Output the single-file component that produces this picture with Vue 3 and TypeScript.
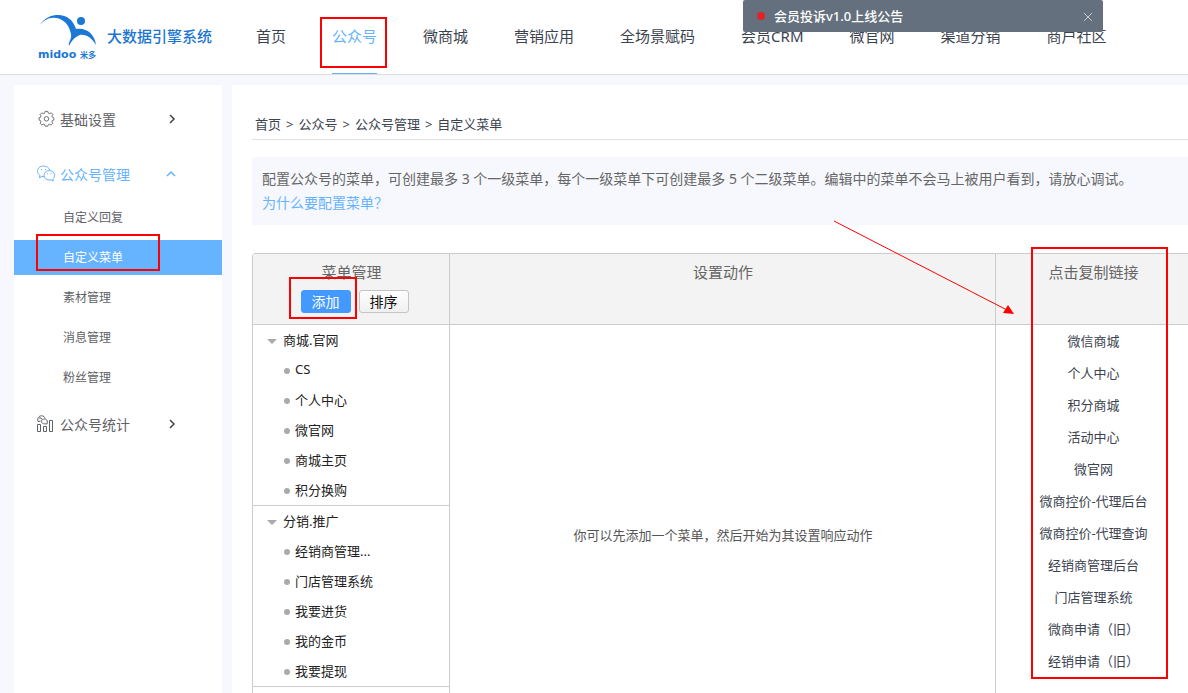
<script setup lang="ts">
interface NavItem {
  label: string
  active?: boolean
}

interface MenuGroup {
  name: string
  children: string[]
}

const navItems: NavItem[] = [
  { label: '首页' },
  { label: '公众号', active: true },
  { label: '微商城' },
  { label: '营销应用' },
  { label: '全场景赋码' },
  { label: '会员CRM' },
  { label: '微官网' },
  { label: '渠道分销' },
  { label: '商户社区' },
]

const subItems: NavItem[] = [
  { label: '自定义回复' },
  { label: '自定义菜单', active: true },
  { label: '素材管理' },
  { label: '消息管理' },
  { label: '粉丝管理' },
]

const crumbs: string[] = ['首页', '公众号', '公众号管理']

const menuGroups: MenuGroup[] = [
  { name: '商城.官网', children: ['CS', '个人中心', '微官网', '商城主页', '积分换购'] },
  { name: '分销.推广', children: ['经销商管理...', '门店管理系统', '我要进货', '我的金币', '我要提现'] },
]

const copyLinks: string[] = [
  '微信商城',
  '个人中心',
  '积分商城',
  '活动中心',
  '微官网',
  '微商控价-代理后台',
  '微商控价-代理查询',
  '经销商管理后台',
  '门店管理系统',
  '微商申请（旧）',
  '经销申请（旧）',
]
</script>

<template>
  <div class="page">
    <header class="topbar">
      <a class="brand" href="#">
        <svg class="logo" width="62" height="52" viewBox="0 -2 62 52" aria-hidden="true">
          <path
            d="M1 13C7 4 14 2 20 2C29 2 35 7 38 16C48 14 57 21 58 32C54 25 48 21 42 22C37 24 34 27 31 33C30 29 34 26 33 21C31 12 26 6 18 5C11 4 6 7 1 13Z"
          />
          <circle cx="43" cy="8" r="4" />
          <text class="logo-latin" x="0" y="45">midoo</text>
          <text class="logo-cjk" x="42" y="45">米多</text>
        </svg>
        <span class="brand-name">大数据引擎系统</span>
      </a>
      <nav class="nav">
        <a v-for="item in navItems" :key="item.label" href="#" :class="['nav-link', { active: item.active }]">
          {{ item.label }}
        </a>
      </nav>
      <div class="notice" role="status">
        <span class="notice-dot"></span>
        <span class="notice-text">会员投诉v1.0上线公告</span>
        <button class="notice-close" type="button" aria-label="关闭">
          <svg width="10" height="10" viewBox="0 0 10 10"><path d="M1 1L9 9M9 1L1 9" /></svg>
        </button>
      </div>
    </header>

    <div class="body">
      <aside class="sidebar">
        <a class="group" href="#">
          <svg class="icon" width="18" height="18" viewBox="0 0 20 20" aria-hidden="true">
            <path
              d="M9 1.500h3l.5 2 1.500.6 1.800-1 1.800 1.900-1 1.700.6 1.400 1.500.5v2.600l-1.600.5-.5 1.500.9 1.700-1.800 1.800-1.700-1-1.500.6-.5 1.700H9l-.5-1.700-1.500-.6-1.700 1-1.800-1.800.9-1.700-.6-1.500-1.500-.5V8.600l1.600-.5.6-1.400-1-1.700 1.800-1.900 1.700 1 1.500-.6z"
            />
            <circle cx="10.500" cy="9.800" r="2.500" />
          </svg>
          <span class="group-name">基础设置</span>
          <svg class="chevron" width="10" height="10" viewBox="0 0 10 10"><path d="M4 1L8 5L4 9" /></svg>
        </a>
        <div>
          <a class="group open" href="#">
            <svg class="icon" width="18" height="18" viewBox="0 0 18 18" aria-hidden="true">
              <path d="M13 5.500C12 2.500 9.500 1 6.500 1C3 1 .5 3.200.5 6.200C.5 8 1.400 9.500 2.900 10.500L2.500 12.800L5 11.400L7 11.600" />
              <path
                d="M12.300 5.600C9.300 5.600 7 7.700 7 10.200C7 13 9.300 15 12.300 15L14 14.800L16.200 16L15.800 13.900C17 13 17.600 11.700 17.600 10.200C17.600 7.700 15.300 5.600 12.300 5.600Z"
              />
              <path d="M4 4.500h1M8 4.500h1M10 8.800h1M13.500 8.800h1" />
            </svg>
            <span class="group-name">公众号管理</span>
            <svg class="chevron" width="10" height="10" viewBox="0 0 10 10"><path d="M1 7L5 3L9 7" /></svg>
          </a>
          <ul class="sub-list">
            <li v-for="item in subItems" :key="item.label">
              <a href="#" :class="['sub-link', { active: item.active }]">{{ item.label }}</a>
            </li>
          </ul>
        </div>
        <a class="group" href="#">
          <svg class="icon" width="18" height="18" viewBox="0 0 18 18" aria-hidden="true">
            <path d="M.5 9.500h3v7h-3zM6.500 11.500h3v5h-3zM12.500 5.500h3v11h-3z" />
            <path d="M1 6.500C0 3 2 .8 4.500.8C6.500.8 7.800 2 8 3.500M1 6.500L3.500 6M2 3h2l1 1.500" />
            <path d="M7.500 4C5.700 4 4.500 5 4.500 6.500C4.500 8 6 8.800 7.500 8.800L10 9L10.300 7C10.600 5.200 9.200 4 7.500 4Z" />
          </svg>
          <span class="group-name">公众号统计</span>
          <svg class="chevron" width="10" height="10" viewBox="0 0 10 10"><path d="M4 1L8 5L4 9" /></svg>
        </a>
      </aside>

      <main class="main">
        <nav class="crumbs" aria-label="面包屑">
          <template v-for="crumb in crumbs" :key="crumb">
            <a href="#">{{ crumb }}</a><span class="sep">&gt;</span>
          </template>
          <span>自定义菜单</span>
        </nav>

        <div class="tip">
          <p>
            配置公众号的菜单，可创建最多 3 个一级菜单，每个一级菜单下可创建最多 5 个二级菜单。编辑中的菜单不会马上被用户看到，请放心调试。
          </p>
          <a href="#">为什么要配置菜单？</a>
        </div>

        <div class="editor">
          <section class="column">
            <div class="column-head">
              <h2>菜单管理</h2>
              <div class="actions">
                <span class="marked"><button class="btn primary" type="button">添加</button></span>
                <button class="btn" type="button">排序</button>
              </div>
            </div>
            <ul v-for="group in menuGroups" :key="group.name" class="tree">
              <li class="tree-parent"><span class="caret"></span>{{ group.name }}</li>
              <li v-for="child in group.children" :key="child" class="tree-child">
                <span class="bullet"></span>{{ child }}
              </li>
            </ul>
          </section>

          <section class="column">
            <div class="column-head"><h2>设置动作</h2></div>
            <div class="empty">你可以先添加一个菜单，然后开始为其设置响应动作</div>
          </section>

          <section class="column">
            <div class="column-head"><h2>点击复制链接</h2></div>
            <ul class="links">
              <li v-for="link in copyLinks" :key="link"><a href="#">{{ link }}</a></li>
            </ul>
            <div class="links-mark"></div>
            <svg class="arrow" width="182" height="98" viewBox="0 0 182 98" aria-hidden="true">
              <path class="arrow-line" d="M1 1L174 90" />
              <path class="arrow-tip" d="M175 85L181 94L170 93Z" />
            </svg>
          </section>
        </div>
      </main>
    </div>
  </div>
</template>

<style>
body {
  margin: 0;
}
</style>

<style scoped>
.page {
  display: flex;
  flex-direction: column;
  height: 100vh;
  overflow: hidden;
  background: #f6f8fd;
  color: #3c4350;
  font-family: "Noto Sans", "Noto Sans CJK SC", sans-serif;
  font-size: 13px;
}

.page *,
.page *::after {
  box-sizing: border-box;
}

a {
  color: inherit;
  text-decoration: none;
}

ul,
p,
h2 {
  margin: 0;
  padding: 0;
  list-style: none;
}

button {
  font-family: inherit;
  cursor: pointer;
}

.topbar {
  position: relative;
  display: flex;
  flex: none;
  height: 75px;
  padding-left: 38px;
  background: #fff;
  border-bottom: 1px solid #dcdee2;
}

.brand {
  display: flex;
  align-items: center;
  gap: 7px;
  width: 218px;
  height: 74px;
  color: #1b75d1;
}

.logo {
  flex: none;
  fill: #1b78d6;
}

.logo-latin {
  font-family: "DejaVu Sans", sans-serif;
  font-size: 11px;
  font-weight: 700;
}

.logo-cjk {
  font-family: "Noto Sans CJK SC", sans-serif;
  font-size: 8px;
  font-weight: 700;
}

.brand-name {
  padding-bottom: 3px;
  font-size: 15px;
  font-weight: 500;
  white-space: nowrap;
}

.nav {
  display: flex;
  gap: 46px;
  font-size: 15px;
  white-space: nowrap;
}

.nav-link {
  position: relative;
  height: 74px;
  border-bottom: 1px solid transparent;
  line-height: 72px;
}

.nav-link.active {
  color: #66b3ff;
  border-bottom-color: #66b3ff;
}

.nav-link.active::after {
  position: absolute;
  top: 17px;
  right: -10px;
  left: -12px;
  height: 51px;
  border: 2px solid #f00;
  content: "";
}

.notice {
  position: absolute;
  top: 0;
  right: 85px;
  display: flex;
  align-items: center;
  width: 360px;
  height: 32px;
  padding: 0 10px 0 14px;
  border-radius: 2px;
  background: #64707d;
  color: #fff;
}

.notice-dot {
  width: 8px;
  height: 8px;
  margin-right: 9px;
  border-radius: 50%;
  background: #e02424;
}

.notice-text {
  flex: 1;
  padding-bottom: 2px;
  font-weight: 500;
}

.notice-close {
  display: flex;
  padding: 2px 0 0;
  border: 0;
  background: none;
}

.notice-close path {
  fill: none;
  stroke: #c4cad0;
}

.body {
  display: flex;
  flex: 1;
  gap: 10px;
  min-height: 0;
  padding: 10px 0 0 14px;
}

.sidebar {
  display: flex;
  flex: none;
  flex-direction: column;
  gap: 5px;
  width: 208px;
  padding-top: 10px;
  background: #fff;
  color: #5f6266;
}

.group {
  display: flex;
  align-items: center;
  height: 50px;
  padding: 0 46px 2px 23px;
  font-size: 14px;
}

.group.open {
  color: #66b3ff;
}

.icon {
  flex: none;
  margin-right: 5px;
  fill: none;
  stroke: currentColor;
}

.group-name {
  flex: 1;
}

.chevron {
  fill: none;
  stroke: #444;
  stroke-width: 1.5;
}

.open .chevron {
  stroke: #66b3ff;
}

.sub-list {
  display: flex;
  flex-direction: column;
  gap: 5px;
  font-size: 12px;
}

.sub-link {
  position: relative;
  display: block;
  padding-left: 49px;
  line-height: 35px;
}

.sub-link.active {
  background: #66b3ff;
  color: #fff;
}

.sub-link.active::after {
  position: absolute;
  top: -6px;
  left: 22px;
  width: 124px;
  height: 37px;
  border: 2px solid #f00;
  content: "";
}

.main {
  flex: 1;
  min-width: 0;
  padding: 24px 0 0 20px;
  overflow: hidden;
  background: #fff;
}

.crumbs {
  display: flex;
  height: 31px;
  padding-left: 3px;
  border-bottom: 1px solid #dfe1e4;
  line-height: 30px;
}

.sep {
  padding: 0 5px;
}

.tip {
  margin-top: 17px;
  padding: 10px;
  background: #f6f8fd;
  color: #666;
  font-size: 14px;
  line-height: 24px;
}

.tip a {
  display: block;
  color: #66b3ff;
}

.editor {
  display: grid;
  grid-template-columns: 197px 1fr 195px;
  width: calc(100% + 4px);
  margin-top: 28px;
  border: 1px solid #ccc;
  border-radius: 3px;
}

.column {
  position: relative;
}

.column + .column {
  box-shadow: -1px 0 #ccc;
}

.column-head {
  height: 71px;
  padding-top: 7px;
  border-bottom: 1px solid #ccc;
  background: #f3f3f3;
  color: #666;
  text-align: center;
}

.column-head h2 {
  font-size: 15px;
  font-weight: 400;
  line-height: 22px;
}

.actions {
  display: flex;
  justify-content: center;
  gap: 8px;
  margin-top: 7px;
  padding-left: 6px;
}

.marked {
  position: relative;
  display: flex;
}

.marked::after {
  position: absolute;
  top: -13px;
  left: -12px;
  width: 68px;
  height: 42px;
  border: 2px solid #f00;
  content: "";
  pointer-events: none;
}

.btn {
  width: 50px;
  height: 23px;
  padding: 0;
  border: 1px solid #c4c4c4;
  border-radius: 3px;
  background: linear-gradient(#fdfdfd, #f0f0f0);
  color: #111;
  font-size: 14px;
  line-height: 21px;
}

.btn.primary {
  border-color: #4499ff;
  background: #4499ff;
  color: #fff;
}

.tree {
  border-bottom: 1px solid #ccc;
  color: #222;
}

.tree li {
  display: flex;
  align-items: center;
  height: 30px;
  padding-bottom: 2px;
}

.tree .tree-parent {
  padding-left: 14px;
}

.tree .tree-child {
  padding-left: 31px;
}

.caret {
  margin: 4px 6px 0 0;
  border: 5px solid transparent;
  border-top-color: #aaa;
  border-bottom: 0;
}

.bullet {
  width: 6px;
  height: 6px;
  margin: 4px 5px 0 0;
  border-radius: 50%;
  background: #aaa;
}

.empty {
  display: flex;
  align-items: center;
  justify-content: center;
  height: 418px;
  color: #555;
}

.links {
  line-height: 32px;
  text-align: center;
}

.links-mark {
  position: absolute;
  top: -7px;
  left: 35px;
  width: 137px;
  height: 432px;
  border: 2px solid #f00;
  pointer-events: none;
}

.arrow {
  position: absolute;
  top: -34px;
  left: -163px;
  pointer-events: none;
}

.arrow-line {
  fill: none;
  stroke: #f00;
}

.arrow-tip {
  fill: #f00;
}
</style>
